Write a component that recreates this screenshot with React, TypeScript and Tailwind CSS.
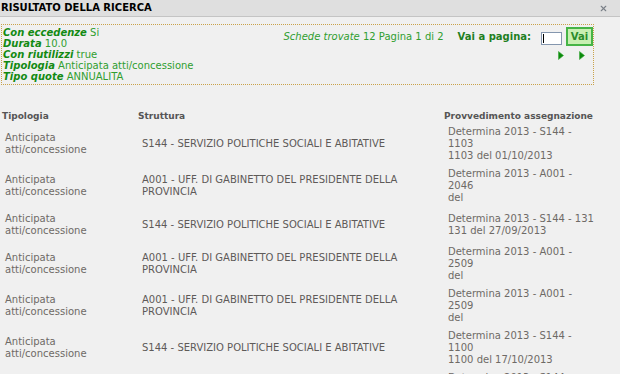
import { X } from 'lucide-react';

const filtri = [
  { label: 'Con eccedenze', value: 'Si' },
  { label: 'Durata', value: '10.0' },
  { label: 'Con riutilizzi', value: 'true' },
  { label: 'Tipologia', value: 'Anticipata atti/concessione' },
  { label: 'Tipo quote', value: 'ANNUALITA' },
];

const GAB = ['A001 - UFF. DI GABINETTO DEL PRESIDENTE DELLA', 'PROVINCIA'];
const SOC = ['S144 - SERVIZIO POLITICHE SOCIALI E ABITATIVE'];

const righe = [
  { struttura: SOC, provv: ['Determina 2013 - S144 -', '1103', '1103 del 01/10/2013'] },
  { struttura: GAB, provv: ['Determina 2013 - A001 -', '2046', 'del'] },
  { struttura: SOC, provv: ['Determina 2013 - S144 - 131', '131 del 27/09/2013'] },
  { struttura: GAB, provv: ['Determina 2013 - A001 -', '2509', 'del'] },
  { struttura: GAB, provv: ['Determina 2013 - A001 -', '2509', 'del'] },
  { struttura: SOC, provv: ['Determina 2013 - S144 -', '1100', '1100 del 17/10/2013'] },
  { struttura: SOC, provv: ['Determina 2013 - S144 -', '1101', '1101 del 17/10/2013'] },
];

function Freccia() {
  return (
    <svg width="6" height="9" viewBox="0 0 6 9">
      <path d="M0.5 0.5 L5.5 4.5 L0.5 8.5 Z" fill="#0b8a0b" stroke="#3aa83a" strokeWidth="0.6" />
    </svg>
  );
}

export default function App() {
  return (
    <div className="w-[620px] h-[374px] overflow-hidden bg-[#f0f0f0] font-['Verdana','DejaVu_Sans',sans-serif] text-[10px]">
      {/* Title bar */}
      <div className="h-[17px] flex items-center justify-between bg-[#dfdfdf] border-b border-[#c4c4c4] pl-[1px] pr-[12px]">
        <span className="font-bold text-[10px] text-black leading-none">RISULTATO DELLA RICERCA</span>
        <X className="w-[9px] h-[9px] text-[#7a8088]" strokeWidth={3} />
      </div>

      {/* Filter box */}
      <div className="mt-[7px] ml-[1px] w-[593px] border border-dotted border-[#c9a24a] flex justify-between py-[2px] pl-[1px]">
        <div className="leading-[11px]">
          {filtri.map((f) => (
            <div key={f.label}>
              <span className="italic font-bold text-[#138a13]">{f.label}</span>{' '}
              <span className="text-[#2f9e2f]">{f.value}</span>
            </div>
          ))}
        </div>
        <div className="flex flex-col items-end">
          <div className="flex items-center">
            <span className="text-[#2f9e2f]">
              <span className="italic">Schede trovate</span> 12 Pagina 1 di 2
            </span>
            <span className="ml-[14px] font-bold text-[#1f7f1f]">Vai a pagina:</span>
            <div className="relative ml-[10px] mt-[4px]">
              <input
                type="text"
                className="block w-[21px] h-[13px] bg-white border border-[#8496ae] outline-none"
              />
              <div className="absolute left-[2px] top-[2px] w-[1px] h-[9px] bg-black" />
            </div>
            <button className="ml-[4px] w-[27px] h-[19px] bg-[#c8efb2] border-2 border-[#46b446] font-bold text-[#2a8a2a] leading-none">
              Vai
            </button>
          </div>
          <div className="flex gap-[15px] mt-[5px] mr-[8px]">
            <Freccia />
            <Freccia />
          </div>
        </div>
      </div>

      {/* Results table */}
      <table className="mt-[24px] w-[620px] border-collapse table-fixed text-[#6e6a66] leading-[12px]">
        <colgroup>
          <col className="w-[136px]" />
          <col className="w-[306px]" />
          <col className="w-[178px]" />
        </colgroup>
        <thead>
          <tr className="text-left text-[#555555] text-[9px]">
            <th className="pl-[2px] py-[1px] font-bold">Tipologia</th>
            <th className="pl-[2px] py-[1px] font-bold">Struttura</th>
            <th className="pl-[2px] py-[1px] font-bold">Provvedimento assegnazione</th>
          </tr>
        </thead>
        <tbody>
          {righe.map((r, i) => (
            <tr key={i}>
              <td className="pl-[5px] py-[6px] align-middle">
                <div>Anticipata</div>
                <div>atti/concessione</div>
              </td>
              <td className="pl-[6px] py-[6px] align-middle text-[#5e5a58]">
                {r.struttura.map((l) => (
                  <div key={l}>{l}</div>
                ))}
              </td>
              <td className="pl-[6px] py-[3px] align-middle">
                {r.provv.map((l, j) => (
                  <div key={j}>{l}</div>
                ))}
              </td>
            </tr>
          ))}
        </tbody>
      </table>
    </div>
  );
}
